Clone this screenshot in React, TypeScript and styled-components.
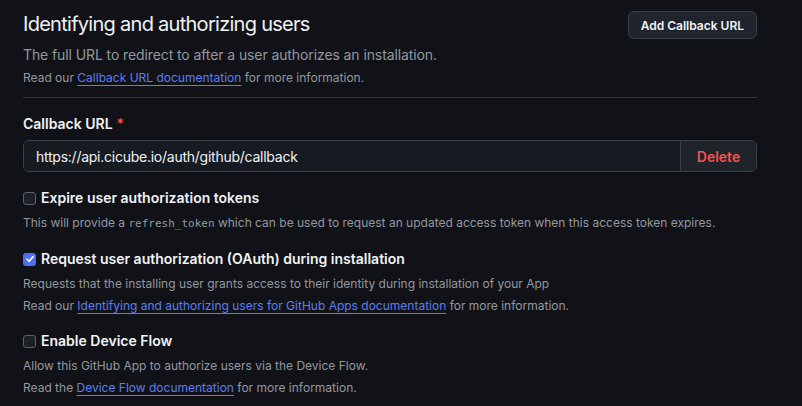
import React from "react";
import styled, { createGlobalStyle } from "styled-components";

const Global = createGlobalStyle`
  html, body { margin: 0; padding: 0; background: #111217; }
  body { font-family: Inter, "Noto Sans", "Liberation Sans", sans-serif; color: #e6edf3; }
  * { box-sizing: border-box; }
`;

const Page = styled.div`
  width: 802px;
  height: 406px;
  background: #111217;
  padding: 10px 45px 0 23px;
  overflow: hidden;
`;

const Header = styled.div`
  display: flex;
  justify-content: space-between;
  align-items: flex-start;
`;

const Title = styled.h2`
  margin: 0;
  font-size: 20px;
  line-height: 28px;
  font-weight: 400;
  letter-spacing: -0.72px;
  color: #f0f3f6;
`;

const Button = styled.button`
  margin-top: 1px;
  height: 28px;
  padding: 0 12px;
  font-family: inherit;
  font-size: 12px;
  font-weight: 600;
  color: #f0f3f6;
  background: #20242c;
  border: 1px solid #3a3f47;
  border-radius: 6px;
`;

const Lead = styled.p`
  margin: 6px 0 0;
  font-size: 14px;
  line-height: 20px;
  letter-spacing: -0.1px;
  color: #9198a1;
`;

const Note = styled.p<{ $gap?: number }>`
  margin: ${(p) => p.$gap ?? 4}px 0 0;
  font-size: 12px;
  line-height: 18px;
  color: #9198a1;
`;

const Link = styled.a`
  color: #5a7ff2;
  text-decoration: underline;
  text-underline-offset: 3px;
  text-decoration-thickness: 1px;
`;

const Code = styled.code`
  font-family: "DejaVu Sans Mono", "Liberation Mono", monospace;
  font-size: 11px;
`;

const Divider = styled.hr`
  margin: 10px 0 0;
  border: 0;
  border-top: 1px solid #30343b;
`;

const Label = styled.div`
  margin-top: 16px;
  font-size: 14px;
  line-height: 20px;
  font-weight: 600;
  color: #f0f3f6;
`;

const Star = styled.span`
  color: #f85149;
  margin-left: 4px;
`;

const InputGroup = styled.div`
  margin-top: 6px;
  display: flex;
  height: 32px;
  border: 1px solid #3a3f47;
  border-radius: 6px;
  overflow: hidden;
`;

const Input = styled.div`
  flex: 1;
  display: flex;
  align-items: center;
  padding: 0 12px;
  background: #161a21;
  font-size: 14px;
  letter-spacing: -0.25px;
  color: #f0f3f6;
`;

const DeleteBtn = styled.div`
  width: 76px;
  display: flex;
  align-items: center;
  justify-content: center;
  background: #1f232a;
  border-left: 1px solid #3a3f47;
  color: #f85149;
  font-size: 14px;
  font-weight: 600;
`;

const CheckRow = styled.label<{ $gap: number }>`
  margin-top: ${(p) => p.$gap}px;
  display: flex;
  align-items: center;
  gap: 5px;
  font-size: 14px;
  line-height: 20px;
  font-weight: 600;
  color: #f0f3f6;
`;

const Box = styled.span<{ $checked?: boolean }>`
  width: 13px;
  height: 13px;
  border-radius: 3px;
  display: inline-flex;
  align-items: center;
  justify-content: center;
  background: ${(p) => (p.$checked ? "#4d6ef0" : "#1e2028")};
  border: ${(p) => (p.$checked ? "none" : "1.5px solid #5c6069")};
`;

function Check({ checked }: { checked?: boolean }) {
  return (
    <Box $checked={checked}>
      {checked && (
        <svg width="10" height="10" viewBox="0 0 10 10">
          <path d="M2 5.2 L4.1 7.3 L8.2 2.6" stroke="#fff" strokeWidth="1.6" fill="none" strokeLinecap="round" strokeLinejoin="round" />
        </svg>
      )}
    </Box>
  );
}

export default function App() {
  return (
    <>
      <Global />
      <Page>
        <Header>
          <Title>Identifying and authorizing users</Title>
          <Button>Add Callback URL</Button>
        </Header>
        <Lead>The full URL to redirect to after a user authorizes an installation.</Lead>
        <Note>
          Read our <Link>Callback URL documentation</Link> for more information.
        </Note>
        <Divider />
        <Label>
          Callback URL<Star>*</Star>
        </Label>
        <InputGroup>
          <Input>https://api.cicube.io/auth/github/callback</Input>
          <DeleteBtn>Delete</DeleteBtn>
        </InputGroup>
        <CheckRow $gap={16}>
          <Check />
          Expire user authorization tokens
        </CheckRow>
        <Note $gap={6}>
          This will provide a <Code>refresh_token</Code> which can be used to request an updated access token when this access token expires.
        </Note>
        <CheckRow $gap={16}>
          <Check checked />
          Request user authorization (OAuth) during installation
        </CheckRow>
        <Note $gap={6}>Requests that the installing user grants access to their identity during installation of your App</Note>
        <Note>
          Read our <Link>Identifying and authorizing users for GitHub Apps documentation</Link> for more information.
        </Note>
        <CheckRow $gap={16}>
          <Check />
          Enable Device Flow
        </CheckRow>
        <Note $gap={6}>Allow this GitHub App to authorize users via the Device Flow.</Note>
        <Note>
          Read the <Link>Device Flow documentation</Link> for more information.
        </Note>
      </Page>
    </>
  );
}
